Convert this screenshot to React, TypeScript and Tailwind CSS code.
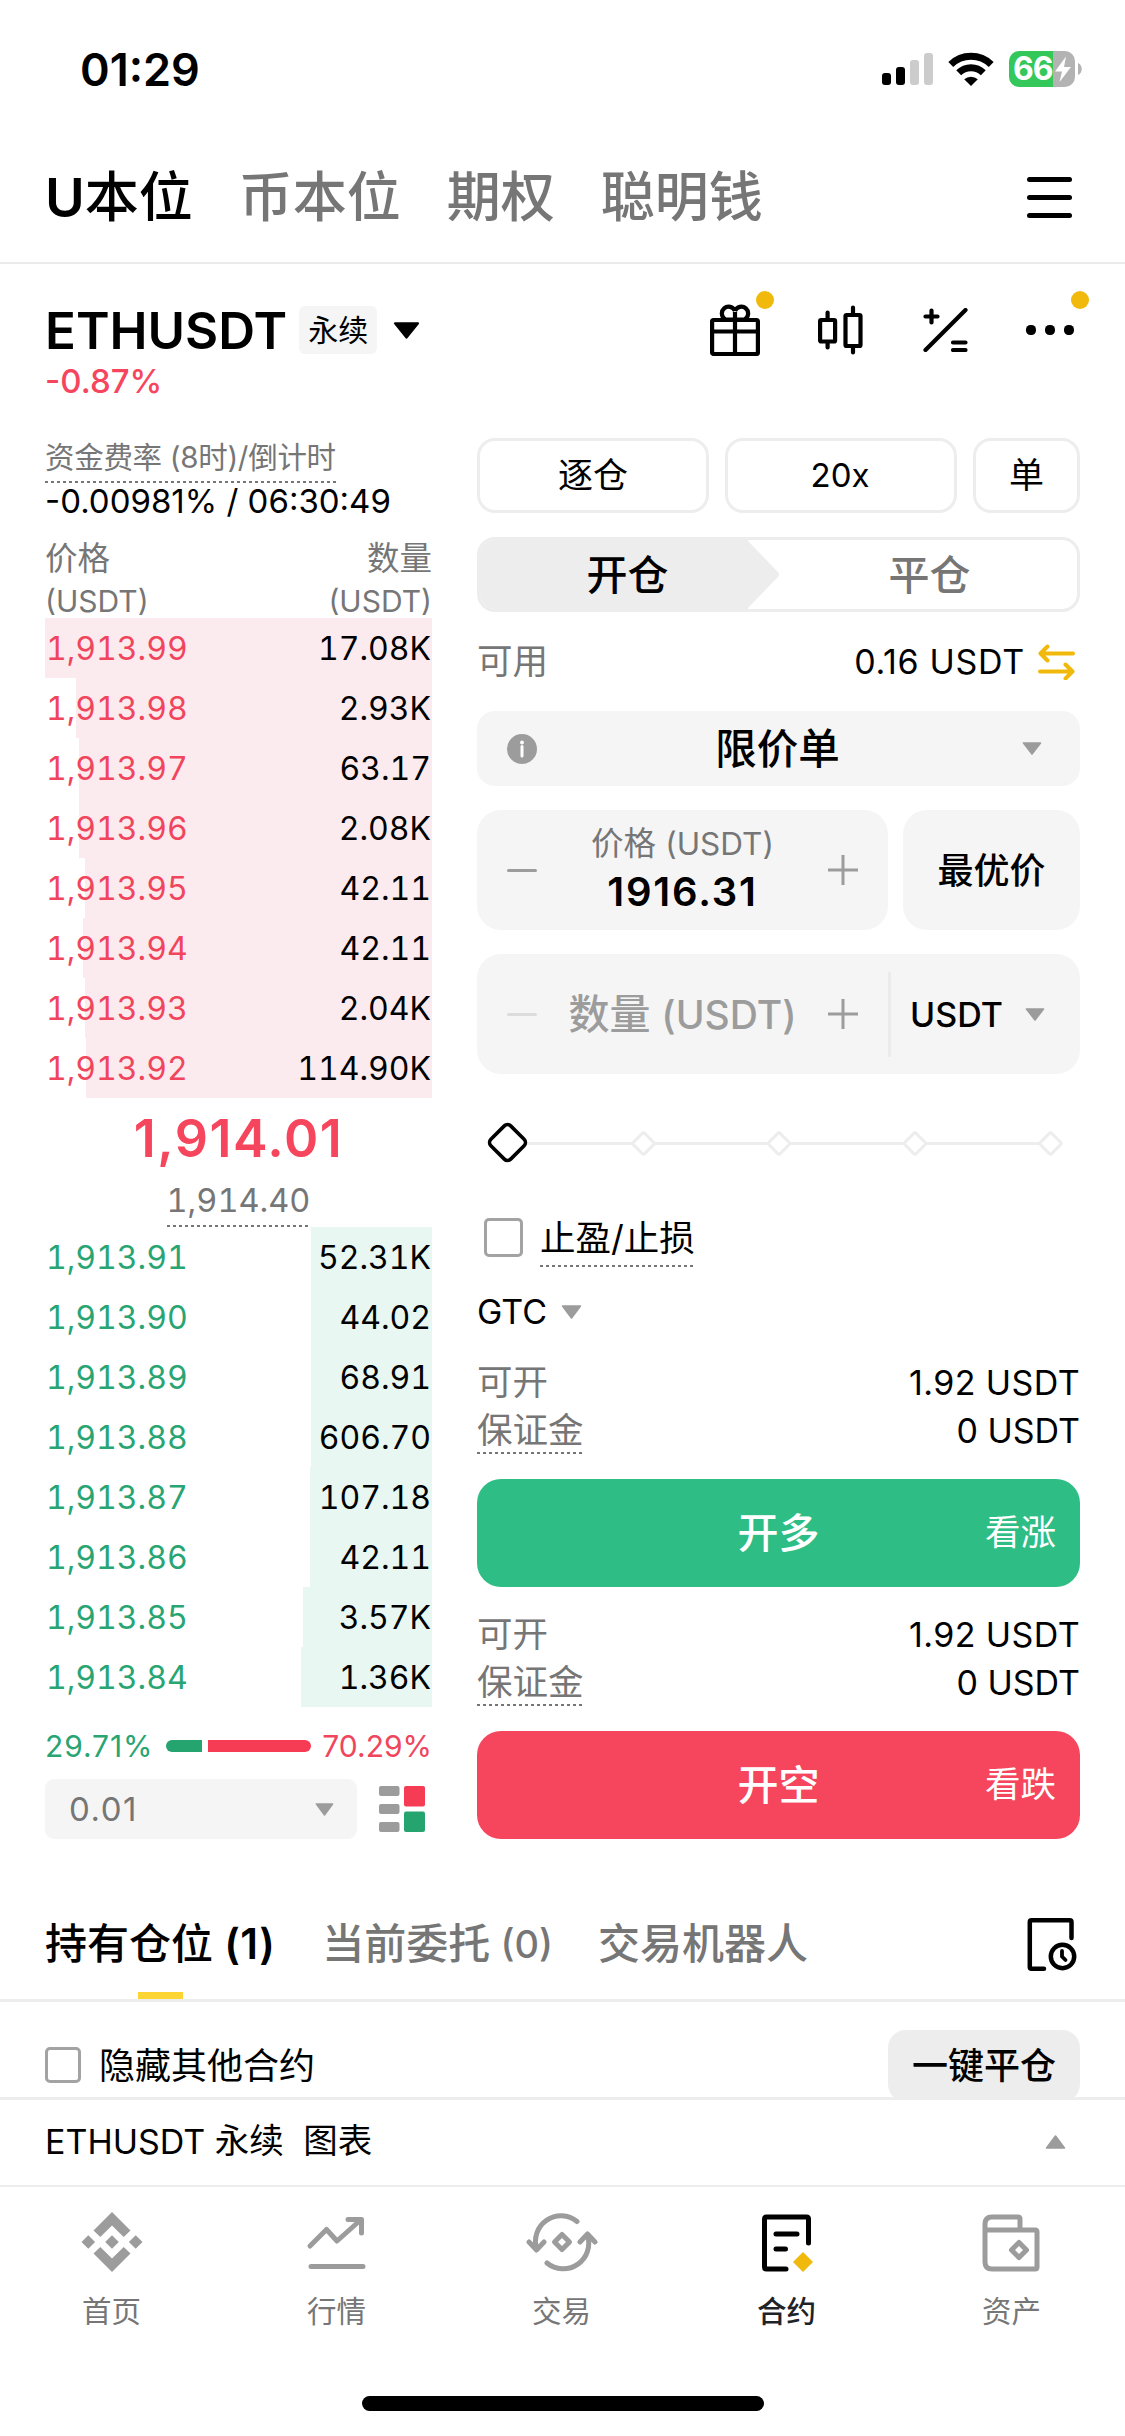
import type { ReactNode } from "react";

const asks = [
  { price: "1,913.99", qty: "17.08K", depth: 387 },
  { price: "1,913.98", qty: "2.93K", depth: 356 },
  { price: "1,913.97", qty: "63.17", depth: 353 },
  { price: "1,913.96", qty: "2.08K", depth: 353 },
  { price: "1,913.95", qty: "42.11", depth: 347 },
  { price: "1,913.94", qty: "42.11", depth: 349 },
  { price: "1,913.93", qty: "2.04K", depth: 347 },
  { price: "1,913.92", qty: "114.90K", depth: 346 },
];

const bids = [
  { price: "1,913.91", qty: "52.31K", depth: 121 },
  { price: "1,913.90", qty: "44.02", depth: 121 },
  { price: "1,913.89", qty: "68.91", depth: 121 },
  { price: "1,913.88", qty: "606.70", depth: 121 },
  { price: "1,913.87", qty: "107.18", depth: 122 },
  { price: "1,913.86", qty: "42.11", depth: 122 },
  { price: "1,913.85", qty: "3.57K", depth: 129 },
  { price: "1,913.84", qty: "1.36K", depth: 131 },
];

function Dashes() {
  return (
    <div className="h-[2px] w-full bg-[repeating-linear-gradient(90deg,#767676_0_3px,transparent_3px_6px)]" />
  );
}

function Caret({ className = "w-[20px] h-[13px] text-[#9c9c9c]" }: { className?: string }) {
  return (
    <svg viewBox="0 0 20 13" preserveAspectRatio="none" className={`shrink-0 ${className}`}>
      <path
        d="M1.5 1h17L10 12z"
        fill="currentColor"
        stroke="currentColor"
        strokeWidth="1.6"
        strokeLinejoin="round"
      />
    </svg>
  );
}

function StatusBar() {
  return (
    <div className="flex h-[138px] items-center pl-[80px] pr-[43px]">
      <div className="text-[45px] font-semibold leading-none">01:29</div>
      <svg className="ml-auto h-[32px] w-[52px]" viewBox="0 0 52 32">
        <rect x="0" y="20" width="9" height="12" rx="3" />
        <rect x="14" y="14" width="9" height="18" rx="3" />
        <rect x="28" y="7" width="9" height="25" rx="3" fill="#cccccc" />
        <rect x="42" y="0" width="9" height="32" rx="3" fill="#cccccc" />
      </svg>
      <svg className="ml-[14px] h-[34px] w-[46px]" viewBox="0 0 46 34" fill="none" stroke="#000">
        <path d="M2.8 12.5a29 29 0 0 1 40.4 0" strokeWidth="7" />
        <path d="M10.7 20.7a17.6 17.6 0 0 1 24.6 0" strokeWidth="7" />
        <path d="M16.2 27.3a10 10 0 0 1 13.6 0L23 34z" fill="#000" stroke="none" />
      </svg>
      <div className="ml-[15px] flex h-[36px] w-[66px] items-center rounded-[10px] bg-[linear-gradient(90deg,#34c759_66%,#b3b3b3_66%)] pl-[4px] text-[32px] font-bold leading-[36px] tracking-[-1px] text-white">
        66
        <svg className="ml-[1px] h-[27px] w-[18px] shrink-0" viewBox="0 0 17 27">
          <path d="M11.5 0.500L0.500 15.500h7L5 26 16.500 11H9.500z" fill="#fff" />
        </svg>
      </div>
      <svg className="ml-[3px] h-[12px] w-[4px]" viewBox="0 0 4 12">
        <path d="M0 0c5 2 5 10 0 12z" fill="#b3b3b3" />
      </svg>
    </div>
  );
}

function MainTabs() {
  return (
    <div className="flex h-[126px] items-center gap-[46px] border-b-2 border-[#ebebeb] pb-[5px] pl-[45px] pr-[53px] text-[54px] font-medium leading-none text-[#767676]">
      <span className="font-semibold text-black">
        U<span className="font-medium">本位</span>
      </span>
      <span>币本位</span>
      <span>期权</span>
      <span>聪明钱</span>
      <div className="ml-auto flex flex-col gap-[13px]">
        <span className="h-[5px] w-[45px] rounded-full bg-black" />
        <span className="h-[5px] w-[45px] rounded-full bg-black" />
        <span className="h-[5px] w-[45px] rounded-full bg-black" />
      </div>
    </div>
  );
}

function PairHeader() {
  return (
    <div className="flex h-[174px] justify-between pl-[45px] pr-[50px] pt-[39px]">
      <div>
        <div className="flex h-[54px] items-center">
          <span className="text-[51px] font-semibold leading-none">ETHUSDT</span>
          <span className="ml-[12px] flex h-[48px] w-[78px] items-center justify-center rounded-[6px] bg-[#f5f5f5] text-[30px] leading-none">
            永续
          </span>
          <Caret className="ml-[16px] h-[17px] w-[27px] text-black" />
        </div>
        <div className="mt-[4px] text-[33px] font-medium leading-[40px] text-[#f6465d]">-0.87%</div>
      </div>
      <div className="relative flex h-[54px] items-center">
        <svg className="h-[52px] w-[50px]" viewBox="0 0 50 52" fill="none" stroke="#000" strokeWidth="4.200">
          <rect x="2.100" y="16" width="45.800" height="34" rx="1.500" />
          <path d="M2 27.500h46M25 8v42" />
          <path d="M25 15.500h-9.500a6.800 6.800 0 1 1 9.500-8.500M25 15.500h9.500a6.800 6.800 0 1 0-9.500-8.500" />
        </svg>
        <svg
          className="ml-[58px] h-[50px] w-[45px]"
          viewBox="0 0 45 50"
          fill="none"
          stroke="#000"
          strokeWidth="4.200"
          strokeLinecap="round"
        >
          <rect x="2.100" y="15" width="15" height="21.500" rx="1" />
          <rect x="27.500" y="10" width="15" height="31" rx="1" />
          <path d="M9.600 7.500v7M9.600 37v5.500M35 2.500V10M35 41v6.500" />
        </svg>
        <svg
          className="ml-[60px] h-[44px] w-[45px]"
          viewBox="0 0 45 44"
          fill="none"
          stroke="#000"
          strokeWidth="4.200"
          strokeLinecap="round"
        >
          <path d="M2.500 42L42.500 2M2.500 8.500h12M8.500 2.500v12M30 34.500h12.500M30 42h12.500" />
        </svg>
        <svg className="ml-[58px] h-[12px] w-[49px]" viewBox="0 0 49 12">
          <rect x="0" y="1" width="10" height="10" rx="4.500" />
          <rect x="19" y="1" width="10" height="10" rx="4.500" />
          <rect x="38" y="1" width="10" height="10" rx="4.500" />
        </svg>
        <span className="absolute left-[46px] top-[-12px] size-[18px] rounded-full bg-[#f0b90b]" />
        <span className="absolute right-[-14px] top-[-12px] size-[18px] rounded-full bg-[#f0b90b]" />
      </div>
    </div>
  );
}

type Level = { price: string; qty: string; depth: number };

function BookRow({ row, side }: { row: Level; side: "ask" | "bid" }) {
  return (
    <div className="relative flex h-[60px] items-center justify-between pr-px text-[32px] leading-[60px]">
      <div
        className={`absolute inset-y-0 right-0 ${side === "ask" ? "bg-[#fcebee]" : "bg-[#e8f7f1]"}`}
        style={{ width: row.depth }}
      />
      <span
        className={`relative pl-px pt-[2px] tabular-nums ${side === "ask" ? "text-[#f0455c]" : "text-[#29a473]"}`}
      >
        {row.price}
      </span>
      <span className="relative pt-[2px] tabular-nums">{row.qty}</span>
    </div>
  );
}

function OrderBook() {
  return (
    <div className="w-[387px] shrink-0">
      <div className="inline-block">
        <div className="h-[43px] text-[29.500px] leading-[38px] tracking-[-0.300px] text-[#767676]">
          资金费率 (8时)/倒计时
        </div>
        <Dashes />
      </div>
      <div className="-mt-[10px] h-[47px] whitespace-nowrap text-[33px] leading-[56px]">
        -0.00981% / 06:30:49
      </div>
      <div className="flex h-[98px] justify-between pt-[17px] text-[32.500px] leading-[43px] text-[#767676]">
        <div>
          价格
          <div className="text-[30px]">(USDT)</div>
        </div>
        <div className="text-right">
          数量
          <div className="text-[30px]">(USDT)</div>
        </div>
      </div>
      {asks.map((row) => (
        <BookRow key={row.price} row={row} side="ask" />
      ))}
      <div className="flex h-[129px] flex-col items-center">
        <div className="flex h-[80px] items-center pt-[2px] text-[52px] font-semibold leading-none tracking-[1.500px] text-[#f6465d]">
          1,914.01
        </div>
        <div>
          <div className="h-[47px] text-[32.500px] leading-[46px] tabular-nums text-[#767676]">1,914.40</div>
          <Dashes />
        </div>
      </div>
      {bids.map((row) => (
        <BookRow key={row.price} row={row} side="bid" />
      ))}
      <div className="flex h-[72px] items-center pt-[6px] text-[30px] leading-none">
        <span className="w-[121px] tracking-[0.900px] text-[#29a473]">29.71%</span>
        <span className="h-[12px] w-[36px] rounded-l-full bg-[#25a46f]" />
        <span className="ml-[6px] h-[12px] w-[103px] rounded-r-full bg-[#f63b55]" />
        <span className="ml-auto text-[#f0455c]">70.29%</span>
      </div>
      <div className="flex items-center">
        <div className="flex h-[60px] w-[312px] items-center justify-between rounded-[9px] bg-[#f5f5f5] pl-[24px] pr-[23px] text-[33px] leading-none tracking-[1.500px] text-[#767676]">
          0.01
          <Caret className="h-[13px] w-[19px] text-[#9c9c9c]" />
        </div>
        <svg className="ml-[22px] h-[46px] w-[46px]" viewBox="0 0 46 46">
          <rect width="20.500" height="10" rx="2" fill="#9c9c9c" />
          <rect y="18" width="20.500" height="10" rx="2" fill="#9c9c9c" />
          <rect y="36" width="20.500" height="10" rx="2" fill="#9c9c9c" />
          <rect x="25" width="21" height="20.500" rx="2" fill="#f63b55" />
          <rect x="25" y="25.500" width="21" height="20.500" rx="2" fill="#25a46f" />
        </svg>
      </div>
    </div>
  );
}

function Minus({ className = "bg-[#9c9c9c]" }: { className?: string }) {
  return <span className={`h-[3px] w-[30px] shrink-0 rounded-full ${className}`} />;
}

function Plus() {
  return (
    <svg className="size-[30px] shrink-0" viewBox="0 0 30 30" stroke="#9c9c9c" strokeWidth="3">
      <path d="M0 15h30M15 0v30" />
    </svg>
  );
}

function CheckBox({ className }: { className: string }) {
  return <span className={`shrink-0 rounded-[5px] border-[3px] border-[#a3a3a3] ${className}`} />;
}

function AmountSlider() {
  return (
    <svg className="block h-[44px] w-[603px]" viewBox="0 0 603 44" fill="#fff">
      <path d="M31 22.500h543" stroke="#ededed" strokeWidth="3" />
      {[166.5, 302, 438, 573.5].map((x) => (
        <rect
          key={x}
          x={x - 8}
          y="14.500"
          width="16"
          height="16"
          rx="2"
          stroke="#ededed"
          strokeWidth="3"
          transform={`rotate(45 ${x} 22.5)`}
        />
      ))}
      <rect
        x="16.500"
        y="7.500"
        width="28"
        height="28"
        rx="4.500"
        stroke="#000"
        strokeWidth="3.600"
        transform="rotate(45 30.500 21.500)"
      />
    </svg>
  );
}

function MarginInfo() {
  return (
    <div className="h-[100px] text-[35.500px] leading-[50px]">
      <div className="flex h-[48px] justify-between">
        <span className="text-[#767676]">可开</span>
        <span className="text-[34px] tracking-[0.400px]">1.92 USDT</span>
      </div>
      <div className="flex h-[48px] justify-between">
        <div className="text-[#767676]">
          <div className="h-[46px]">保证金</div>
          <Dashes />
        </div>
        <span className="text-[34px]">0 USDT</span>
      </div>
    </div>
  );
}

function TradeButton({ label, hint, className }: { label: string; hint: string; className: string }) {
  return (
    <div
      className={`grid h-[108px] grid-cols-[1fr_auto_1fr] items-center rounded-[24px] px-[24px] leading-none text-white ${className}`}
    >
      <span />
      <span className="text-[41px] font-medium">{label}</span>
      <span className="text-right text-[35.500px]">{hint}</span>
    </div>
  );
}

function OrderForm() {
  return (
    <div className="w-[603px]">
      <div className="flex h-[75px] gap-[16px] text-[35px] leading-none">
        <div className="flex w-[232px] items-center justify-center rounded-[18px] border-[3px] border-[#ededed]">
          逐仓
        </div>
        <div className="flex w-[232px] items-center justify-center rounded-[18px] border-[3px] border-[#ededed] pr-[2px] text-[33px]">
          20x
        </div>
        <div className="flex flex-1 items-center justify-center rounded-[18px] border-[3px] border-[#ededed]">
          单
        </div>
      </div>

      <div className="mt-[24px] flex h-[75px] overflow-hidden rounded-[18px] border-[3px] border-[#ededed] text-[41px] font-medium leading-[71px]">
        <div className="w-[268px] bg-[#ededed] pl-[27px] text-center">开仓</div>
        <svg className="-ml-[1px] h-[69px] w-[33px] shrink-0" viewBox="0 0 33 69">
          <path d="M0 0L31 32q2 2.500 0 5L0 69z" fill="#ededed" />
        </svg>
        <div className="flex-1 pl-[2px] text-center text-[#767676]">平仓</div>
      </div>

      <div className="flex h-[99px] items-center text-[34px] leading-none">
        <span className="text-[35.500px] text-[#767676]">可用</span>
        <span className="ml-auto tracking-[0.700px]">0.16 USDT</span>
        <svg
          className="ml-[13px] mr-[5px] h-[36px] w-[37px]"
          viewBox="0 0 37 36"
          fill="none"
          stroke="#f0b90b"
          strokeWidth="4"
          strokeLinecap="round"
          strokeLinejoin="round"
        >
          <path d="M35 9.500H2.500M9.500 2.500l-7 7 7 7M2 27.500h32.500M27.500 20.500l7 7-7 7" />
        </svg>
      </div>

      <div className="flex h-[75px] items-center justify-between rounded-[18px] bg-[#f5f5f5] pl-[30px] pr-[38px]">
        <svg className="size-[30px]" viewBox="0 0 30 30">
          <circle cx="15" cy="15" r="15" fill="#9c9c9c" />
          <circle cx="15" cy="8.500" r="1.900" fill="#fff" />
          <path d="M15 12.500V22" stroke="#fff" strokeWidth="3" strokeLinecap="round" />
        </svg>
        <span className="pr-[4px] pt-[2px] text-[41.500px] font-medium leading-[73px]">限价单</span>
        <Caret />
      </div>

      <div className="mt-[24px] flex h-[120px] gap-[15px]">
        <div className="flex w-[411px] items-center justify-between rounded-[24px] bg-[#f5f5f5] px-[30px]">
          <Minus />
          <div className="text-center">
            <div className="-mt-[4px] text-[32.500px] leading-[47px] text-[#767676]">
              价格 <span className="text-[31.500px]">(USDT)</span>
            </div>
            <div className="text-[40px] font-semibold leading-[49px] tracking-[1.800px]">1916.31</div>
          </div>
          <Plus />
        </div>
        <div className="flex flex-1 items-center justify-center rounded-[24px] bg-[#f5f5f5] pt-[2px] text-[36px] font-medium leading-none">
          最优价
        </div>
      </div>

      <div className="mt-[24px] flex h-[120px] items-center rounded-[24px] bg-[#f5f5f5] leading-none">
        <div className="flex w-[411px] items-center justify-between px-[30px]">
          <Minus className="bg-[#dcdcdc]" />
          <span className="text-[41px] font-medium text-[#9c9c9c]">
            数量 <span className="text-[39px]">(USDT)</span>
          </span>
          <Plus />
        </div>
        <span className="h-[85px] w-[3px] bg-[#ebebeb]" />
        <span className="ml-[19px] pt-[2px] text-[34px] font-medium">USDT</span>
        <Caret className="ml-auto mr-[35px] h-[13px] w-[20px] text-[#9c9c9c]" />
      </div>

      <div className="pt-[47px]">
        <AmountSlider />
      </div>

      <div className="mt-[49px] flex h-[54px] pl-[7px]">
        <CheckBox className="mt-[4px] size-[39px]" />
        <div className="ml-[17px]">
          <div className="h-[51px] text-[35.500px] leading-[49px]">止盈/止损</div>
          <Dashes />
        </div>
      </div>
      <div className="flex h-[90px] items-center pb-[2px] text-[34px] leading-none">
        GTC
        <Caret className="ml-[14px] h-[14px] w-[21px] text-[#9c9c9c]" />
      </div>

      <MarginInfo />
      <div className="pt-[21px]">
        <TradeButton label="开多" hint="看涨" className="bg-[#2ebd85]" />
      </div>
      <div className="mt-[23px]">
        <MarginInfo />
      </div>
      <div className="pt-[21px]">
        <TradeButton label="开空" hint="看跌" className="bg-[#f6465d]" />
      </div>
    </div>
  );
}

function Positions() {
  return (
    <>
      <div className="flex h-[163px] border-b-[3px] border-[#ededed] pl-[45px] pr-[48px] text-[42px] font-medium leading-none text-[#767676]">
        <div className="flex flex-col items-center">
          <div className="flex h-[153px] items-center whitespace-pre pt-[56px] text-black">
            持有仓位 <span className="font-semibold tracking-[0.500px]">(1)</span>
          </div>
          <div className="h-[7px] w-[45px] bg-[#fcd535]" />
        </div>
        <div className="ml-[47px] flex h-[153px] items-center whitespace-pre pt-[56px]">
          当前委托<span className="text-[38px]"> (0)</span>
        </div>
        <div className="ml-[45px] flex h-[153px] items-center pt-[56px]">交易机器人</div>
        <svg
          className="ml-auto mt-[79px] h-[53px] w-[50px]"
          viewBox="0 0 50 53"
          fill="none"
          stroke="#000"
          strokeWidth="4.500"
          strokeLinecap="round"
        >
          <path d="M44.500 20V4q0-1.700-1.700-1.700H4.500Q2.800 2.300 2.800 4v45q0 1.700 1.700 1.700H17" />
          <circle cx="35.500" cy="38.500" r="11.700" />
          <path d="M35 33v5.500l3.500 3.500" strokeWidth="3.800" />
        </svg>
      </div>
      <div className="flex h-[98px] overflow-hidden border-b-[3px] border-[#ededed] px-[45px] pt-[28px]">
        <CheckBox className="mt-[17px] size-[36px]" />
        <span className="ml-[18px] text-[36px] leading-[72px]">隐藏其他合约</span>
        <div className="ml-auto h-[72px] w-[192px] rounded-[18px] bg-[#ededed] text-center text-[36px] font-medium leading-[72px]">
          一键平仓
        </div>
      </div>
      <div className="flex h-[87px] items-center whitespace-pre border-b-2 border-[#ededed] pb-[2px] pl-[45px] pr-[59px] text-[34px] leading-none">
        ETHUSDT <span className="text-[34.500px]">永续{"  "}图表</span>
        <Caret className="ml-auto h-[14px] w-[21px] rotate-180 text-[#9c9c9c]" />
      </div>
    </>
  );
}

function NavItem({ label, active, children }: { label: string; active?: boolean; children: ReactNode }) {
  return (
    <div
      className={`flex flex-col items-center pr-[2px] text-[29.500px] leading-[40px] ${active ? "font-medium text-[#1e2329]" : "text-[#767676]"}`}
    >
      <svg
        className="h-[60px] w-[72px]"
        viewBox="0 0 72 60"
        fill="none"
        stroke="#9c9c9c"
        strokeWidth="5"
        strokeLinecap="round"
        strokeLinejoin="round"
      >
        {children}
      </svg>
      <span className="mt-[19px]">{label}</span>
    </div>
  );
}

function BottomNav() {
  return (
    <div className="grid h-[209px] grid-cols-5 pt-[25px]">
      <NavItem label="首页">
        <g fill="#9c9c9c" stroke="none">
          <path d="M36 0l18.500 18.500-6.800 6.600L36 13.500 24.300 25.100l-6.800-6.600z" />
          <path d="M36 60l18.500-18.500-6.800-6.600L36 46.500 24.300 34.900l-6.800 6.600z" />
          <path d="M36 23.200l6.800 6.800-6.800 6.800-6.800-6.800zM12.300 23.200l6.800 6.800-6.800 6.800L5.500 30zM59.700 23.200l6.800 6.800-6.800 6.800-6.800-6.800z" />
        </g>
      </NavItem>
      <NavItem label="行情">
        <path d="M9 34l16.500-16.500L36 29 59.500 8M47 7.500h13.500V21M10 54.500h52" />
      </NavItem>
      <NavItem label="交易">
        <path d="M51 9.500A25.500 25.500 0 0 0 10.500 36.500M3 30l7.500 8 7.500-8M21 51A25.500 25.500 0 0 0 61.500 23.500M54 30l7.500-8 7.500 8" />
        <path d="M36 22.500l7.500 7.500-7.500 7.500-7.500-7.500z" />
      </NavItem>
      <NavItem label="合约" active>
        <path
          d="M57.500 31V7q0-2-2-2h-40q-2 0-2 2v48q0 2 2 2H35M25 22h21M25 37h9.500"
          stroke="#000"
        />
        <path d="M52 40l10 10-10 10-10-10z" fill="#f0b90b" stroke="none" />
      </NavItem>
      <NavItem label="资产">
        <path d="M9 18v32q0 7 7 7h43q2 0 2-2V20q0-2-2-2H9V12q0-7 7-7h26q2 0 2 2v11" />
        <path d="M43 30.500l7.500 7.500-7.500 7.500-7.500-7.500z" />
      </NavItem>
    </div>
  );
}

export default function App() {
  return (
    <div className="flex h-[2436px] w-[1125px] flex-col overflow-hidden bg-white font-['Inter','Noto_Sans_CJK_SC',sans-serif] text-black">
      <StatusBar />
      <MainTabs />
      <PairHeader />
      <div className="flex h-[1401px] justify-between px-[45px]">
        <OrderBook />
        <OrderForm />
      </div>
      <Positions />
      <BottomNav />
      <div className="mx-auto h-[15px] w-[402px] shrink-0 rounded-full bg-black" />
    </div>
  );
}
